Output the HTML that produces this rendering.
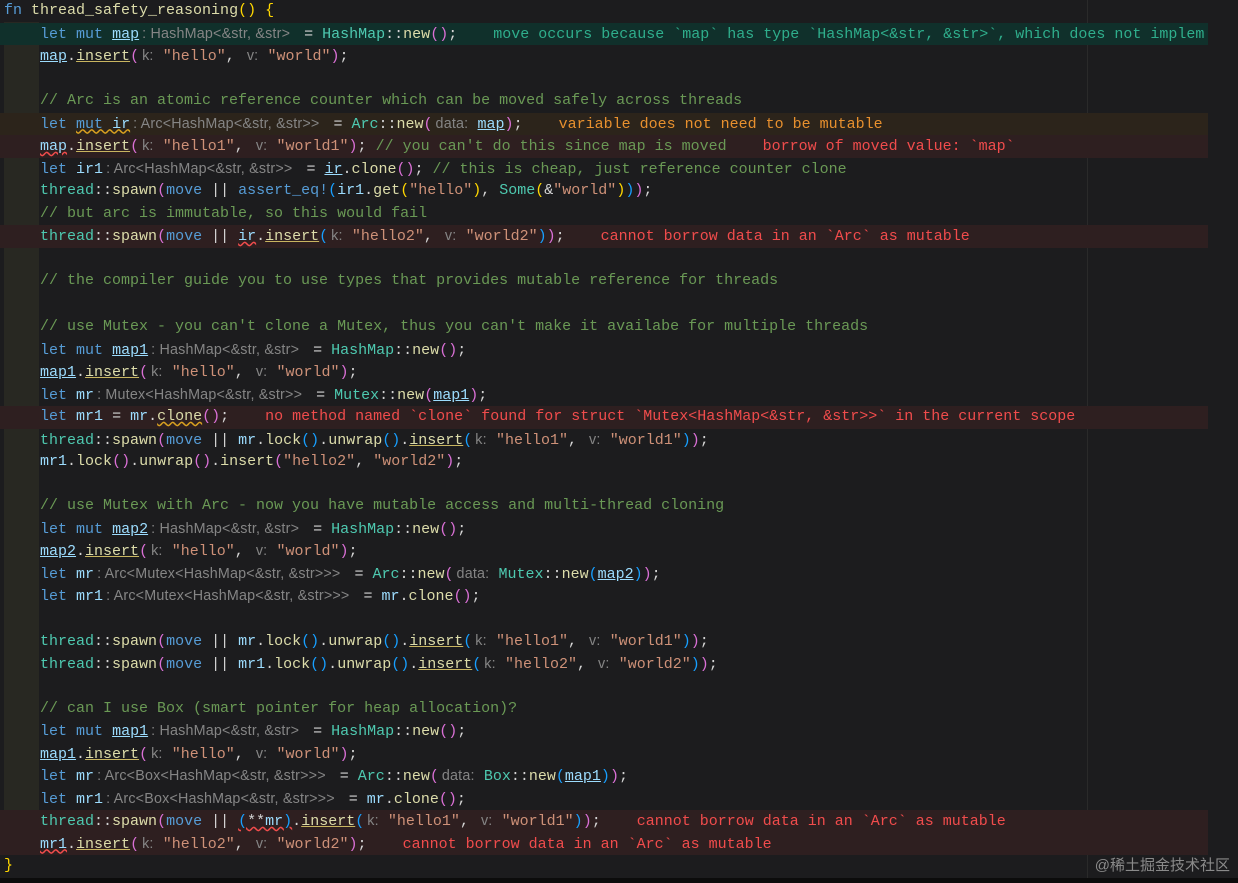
<!DOCTYPE html>
<html><head><meta charset="utf-8"><style>
html,body{margin:0;padding:0;}
body{width:1238px;height:883px;background:#1c1c1e;position:relative;overflow:hidden;font-family:"Liberation Mono",monospace;font-size:15px;color:#d4d4d4;}
.l{position:absolute;left:0;height:22.5px;line-height:22.5px;white-space:pre;width:1208px;}
.l .x{position:absolute;left:4px;}
.bgI{background:#10302b;}
.bgW{background:#2c241b;}
.bgE{background:#2e1f20;}
.ind{position:absolute;left:4px;width:35px;background:rgba(120,120,60,0.13);}
.k{color:#569cd6}.v{color:#9cdcfe}.f{color:#dcdcaa}.t{color:#4ec9b0}.s{color:#ce9178}.c{color:#6a9955}
.h{color:#858585;font-family:"Liberation Sans",sans-serif;font-size:14.3px;letter-spacing:0.2px;padding-right:5px;padding-left:3px}
.p1{color:#ffd700}.p2{color:#da70d6}.p3{color:#179fff}
.e{color:#f14c4c}.w{color:#e8902e}.i{color:#2fae8c}
.u{text-decoration:underline;text-decoration-color:#9cdcfe}
.uf{text-decoration:underline;text-decoration-color:#c8b560}
.sq{text-decoration:underline wavy #f14c4c}
.sw{text-decoration:underline wavy #d9a020}
.bot{position:absolute;left:0;top:878px;width:1238px;height:5px;background:#0c0c0c;}
.wm{position:absolute;right:8px;top:854px;color:#8a8a8a;font-family:"Liberation Sans","Noto Sans CJK SC",sans-serif;font-size:15px;}
.ruler{position:absolute;left:1087px;top:0;width:1px;height:878px;background:#2a2a2a;}
</style></head><body>
<div class="ruler"></div>
<div class="ind" style="top:22px;height:809px;"></div>

<div class="l" style="top:0"><span class="x"><span class="k">fn</span> <span class="f">thread_safety_reasoning</span><span class="p1">()</span> <span class="p1">{</span></span></div>
<div class="l bgI" style="top:22.5px"><span class="x">    <span class="k">let</span> <span class="k">mut</span> <span class="v u">map</span><span class="h">: HashMap&lt;&amp;str, &amp;str&gt;</span> = <span class="t">HashMap</span>::<span class="f">new</span><span class="p2">()</span>;    <span class="i">move occurs because `map` has type `HashMap&lt;&amp;str, &amp;str&gt;`, which does not implem</span></span></div>
<div class="l" style="top:45px"><span class="x">    <span class="v u">map</span>.<span class="f uf">insert</span><span class="p2">(</span><span class="h">k: </span><span class="s">"hello"</span>, <span class="h">v: </span><span class="s">"world"</span><span class="p2">)</span>;</span></div>
<div class="l" style="top:90px"><span class="x">    <span class="c">// Arc is an atomic reference counter which can be moved safely across threads</span></span></div>
<div class="l bgW" style="top:112.5px"><span class="x">    <span class="k">let</span> <span class="k sw">mut</span><span class="sw"> </span><span class="v sw">ir</span><span class="h">: Arc&lt;HashMap&lt;&amp;str, &amp;str&gt;&gt;</span> = <span class="t">Arc</span>::<span class="f">new</span><span class="p2">(</span><span class="h">data: </span><span class="v u">map</span><span class="p2">)</span>;    <span class="w">variable does not need to be mutable</span></span></div>
<div class="l bgE" style="top:135px"><span class="x">    <span class="v sq">map</span>.<span class="f uf">insert</span><span class="p2">(</span><span class="h">k: </span><span class="s">"hello1"</span>, <span class="h">v: </span><span class="s">"world1"</span><span class="p2">)</span>; <span class="c">// you can't do this since map is moved</span>    <span class="e">borrow of moved value: `map`</span></span></div>
<div class="l" style="top:157.5px"><span class="x">    <span class="k">let</span> <span class="v">ir1</span><span class="h">: Arc&lt;HashMap&lt;&amp;str, &amp;str&gt;&gt;</span> = <span class="v u">ir</span>.<span class="f">clone</span><span class="p2">()</span>; <span class="c">// this is cheap, just reference counter clone</span></span></div>
<div class="l" style="top:180px"><span class="x">    <span class="t">thread</span>::<span class="f">spawn</span><span class="p2">(</span><span class="k">move</span> || <span class="k">assert_eq!</span><span class="p3">(</span><span class="v">ir1</span>.<span class="f">get</span><span class="p1">(</span><span class="s">"hello"</span><span class="p1">)</span>, <span class="t">Some</span><span class="p1">(</span>&amp;<span class="s">"world"</span><span class="p1">)</span><span class="p3">)</span><span class="p2">)</span>;</span></div>
<div class="l" style="top:202.5px"><span class="x">    <span class="c">// but arc is immutable, so this would fail</span></span></div>
<div class="l bgE" style="top:225px"><span class="x">    <span class="t">thread</span>::<span class="f">spawn</span><span class="p2">(</span><span class="k">move</span> || <span class="v sq">ir</span>.<span class="f uf">insert</span><span class="p3">(</span><span class="h">k: </span><span class="s">"hello2"</span>, <span class="h">v: </span><span class="s">"world2"</span><span class="p3">)</span><span class="p2">)</span>;    <span class="e">cannot borrow data in an `Arc` as mutable</span></span></div>
<div class="l" style="top:270px"><span class="x">    <span class="c">// the compiler guide you to use types that provides mutable reference for threads</span></span></div>
<div class="l" style="top:316px"><span class="x">    <span class="c">// use Mutex - you can't clone a Mutex, thus you can't make it availabe for multiple threads</span></span></div>
<div class="l" style="top:338.5px"><span class="x">    <span class="k">let</span> <span class="k">mut</span> <span class="v u">map1</span><span class="h">: HashMap&lt;&amp;str, &amp;str&gt;</span> = <span class="t">HashMap</span>::<span class="f">new</span><span class="p2">()</span>;</span></div>
<div class="l" style="top:361px"><span class="x">    <span class="v u">map1</span>.<span class="f uf">insert</span><span class="p2">(</span><span class="h">k: </span><span class="s">"hello"</span>, <span class="h">v: </span><span class="s">"world"</span><span class="p2">)</span>;</span></div>
<div class="l" style="top:383.5px"><span class="x">    <span class="k">let</span> <span class="v">mr</span><span class="h">: Mutex&lt;HashMap&lt;&amp;str, &amp;str&gt;&gt;</span> = <span class="t">Mutex</span>::<span class="f">new</span><span class="p2">(</span><span class="v u">map1</span><span class="p2">)</span>;</span></div>
<div class="l bgE" style="top:406px"><span class="x">    <span class="k">let</span> <span class="v">mr1</span> = <span class="v">mr</span>.<span class="f sw">clone</span><span class="p2">()</span>;    <span class="e">no method named `clone` found for struct `Mutex&lt;HashMap&lt;&amp;str, &amp;str&gt;&gt;` in the current scope</span></span></div>
<div class="l" style="top:428.5px"><span class="x">    <span class="t">thread</span>::<span class="f">spawn</span><span class="p2">(</span><span class="k">move</span> || <span class="v">mr</span>.<span class="f">lock</span><span class="p3">()</span>.<span class="f">unwrap</span><span class="p3">()</span>.<span class="f uf">insert</span><span class="p3">(</span><span class="h">k: </span><span class="s">"hello1"</span>, <span class="h">v: </span><span class="s">"world1"</span><span class="p3">)</span><span class="p2">)</span>;</span></div>
<div class="l" style="top:451px"><span class="x">    <span class="v">mr1</span>.<span class="f">lock</span><span class="p2">()</span>.<span class="f">unwrap</span><span class="p2">()</span>.<span class="f">insert</span><span class="p2">(</span><span class="s">"hello2"</span>, <span class="s">"world2"</span><span class="p2">)</span>;</span></div>
<div class="l" style="top:495px"><span class="x">    <span class="c">// use Mutex with Arc - now you have mutable access and multi-thread cloning</span></span></div>
<div class="l" style="top:517.5px"><span class="x">    <span class="k">let</span> <span class="k">mut</span> <span class="v u">map2</span><span class="h">: HashMap&lt;&amp;str, &amp;str&gt;</span> = <span class="t">HashMap</span>::<span class="f">new</span><span class="p2">()</span>;</span></div>
<div class="l" style="top:540px"><span class="x">    <span class="v u">map2</span>.<span class="f uf">insert</span><span class="p2">(</span><span class="h">k: </span><span class="s">"hello"</span>, <span class="h">v: </span><span class="s">"world"</span><span class="p2">)</span>;</span></div>
<div class="l" style="top:562.5px"><span class="x">    <span class="k">let</span> <span class="v">mr</span><span class="h">: Arc&lt;Mutex&lt;HashMap&lt;&amp;str, &amp;str&gt;&gt;&gt;</span> = <span class="t">Arc</span>::<span class="f">new</span><span class="p2">(</span><span class="h">data: </span><span class="t">Mutex</span>::<span class="f">new</span><span class="p3">(</span><span class="v u">map2</span><span class="p3">)</span><span class="p2">)</span>;</span></div>
<div class="l" style="top:585px"><span class="x">    <span class="k">let</span> <span class="v">mr1</span><span class="h">: Arc&lt;Mutex&lt;HashMap&lt;&amp;str, &amp;str&gt;&gt;&gt;</span> = <span class="v">mr</span>.<span class="f">clone</span><span class="p2">()</span>;</span></div>
<div class="l" style="top:630px"><span class="x">    <span class="t">thread</span>::<span class="f">spawn</span><span class="p2">(</span><span class="k">move</span> || <span class="v">mr</span>.<span class="f">lock</span><span class="p3">()</span>.<span class="f">unwrap</span><span class="p3">()</span>.<span class="f uf">insert</span><span class="p3">(</span><span class="h">k: </span><span class="s">"hello1"</span>, <span class="h">v: </span><span class="s">"world1"</span><span class="p3">)</span><span class="p2">)</span>;</span></div>
<div class="l" style="top:652.5px"><span class="x">    <span class="t">thread</span>::<span class="f">spawn</span><span class="p2">(</span><span class="k">move</span> || <span class="v">mr1</span>.<span class="f">lock</span><span class="p3">()</span>.<span class="f">unwrap</span><span class="p3">()</span>.<span class="f uf">insert</span><span class="p3">(</span><span class="h">k: </span><span class="s">"hello2"</span>, <span class="h">v: </span><span class="s">"world2"</span><span class="p3">)</span><span class="p2">)</span>;</span></div>
<div class="l" style="top:697.5px"><span class="x">    <span class="c">// can I use Box (smart pointer for heap allocation)?</span></span></div>
<div class="l" style="top:720px"><span class="x">    <span class="k">let</span> <span class="k">mut</span> <span class="v u">map1</span><span class="h">: HashMap&lt;&amp;str, &amp;str&gt;</span> = <span class="t">HashMap</span>::<span class="f">new</span><span class="p2">()</span>;</span></div>
<div class="l" style="top:742.5px"><span class="x">    <span class="v u">map1</span>.<span class="f uf">insert</span><span class="p2">(</span><span class="h">k: </span><span class="s">"hello"</span>, <span class="h">v: </span><span class="s">"world"</span><span class="p2">)</span>;</span></div>
<div class="l" style="top:765px"><span class="x">    <span class="k">let</span> <span class="v">mr</span><span class="h">: Arc&lt;Box&lt;HashMap&lt;&amp;str, &amp;str&gt;&gt;&gt;</span> = <span class="t">Arc</span>::<span class="f">new</span><span class="p2">(</span><span class="h">data: </span><span class="t">Box</span>::<span class="f">new</span><span class="p3">(</span><span class="v u">map1</span><span class="p3">)</span><span class="p2">)</span>;</span></div>
<div class="l" style="top:787.5px"><span class="x">    <span class="k">let</span> <span class="v">mr1</span><span class="h">: Arc&lt;Box&lt;HashMap&lt;&amp;str, &amp;str&gt;&gt;&gt;</span> = <span class="v">mr</span>.<span class="f">clone</span><span class="p2">()</span>;</span></div>
<div class="l bgE" style="top:810px"><span class="x">    <span class="t">thread</span>::<span class="f">spawn</span><span class="p2">(</span><span class="k">move</span> || <span class="sq"><span class="p3">(</span>**<span class="v">mr</span><span class="p3">)</span></span>.<span class="f uf">insert</span><span class="p3">(</span><span class="h">k: </span><span class="s">"hello1"</span>, <span class="h">v: </span><span class="s">"world1"</span><span class="p3">)</span><span class="p2">)</span>;    <span class="e">cannot borrow data in an `Arc` as mutable</span></span></div>
<div class="l bgE" style="top:832.5px"><span class="x">    <span class="v sq">mr1</span>.<span class="f uf">insert</span><span class="p2">(</span><span class="h">k: </span><span class="s">"hello2"</span>, <span class="h">v: </span><span class="s">"world2"</span><span class="p2">)</span>;    <span class="e">cannot borrow data in an `Arc` as mutable</span></span></div>
<div class="l" style="top:855px"><span class="x"><span class="p1">}</span></span></div>
<div class="wm">@稀土掘金技术社区</div>
<div class="bot"></div>
</body></html>
